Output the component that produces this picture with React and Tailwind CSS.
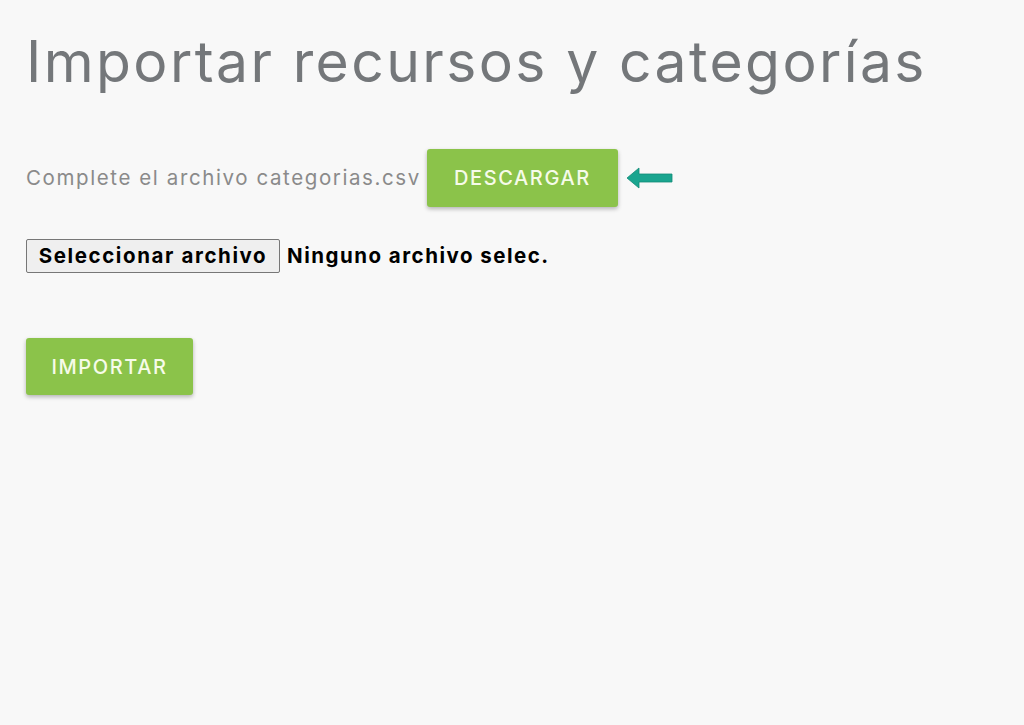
export default function App() {
  return (
    <div className="min-h-[725px] w-full bg-[#f8f8f8] px-[26px] pt-[22px]" style={{ fontFamily: "Inter, 'Noto Sans', sans-serif" }}>
      <h1 className="text-[57px] font-normal leading-[80px] tracking-[2.4px] text-[#74777a]">
        Importar recursos y categorías
      </h1>

      <div className="mt-[47px] flex items-center">
        <span className="text-[20.5px] tracking-[1.6px] text-[#8a8a8a]">Complete el archivo categorias.csv</span>
        <button className="ml-[6px] h-[58px] w-[191px] rounded-[3px] bg-[#8bc34a] text-[20px] font-medium tracking-[1.6px] text-[#f6fbe9] shadow-[0_2px_4px_rgba(0,0,0,0.28)]">
          DESCARGAR
        </button>
        <svg className="ml-[8px]" width="48" height="22" viewBox="0 0 48 22">
          <polygon points="1,11 13,1 13,7 46,7 46,15 13,15 13,21" fill="#1aa58f" stroke="#138a76" strokeWidth="0.8" />
        </svg>
      </div>

      <div className="mt-[32px] flex items-center">
        <div className="flex h-[34px] w-[254px] items-center justify-center rounded-[2px] border border-[#777] bg-[#efefef] text-[20.5px] font-bold tracking-[1.6px] text-black">
          Seleccionar archivo
        </div>
        <span className="ml-[7px] text-[20.5px] font-bold tracking-[1.5px] text-black">Ninguno archivo selec.</span>
      </div>

      <button className="mt-[65px] h-[57px] w-[167px] rounded-[3px] bg-[#8bc34a] text-[20px] font-medium tracking-[1.6px] text-[#f6fbe9] shadow-[0_2px_4px_rgba(0,0,0,0.28)]">
        IMPORTAR
      </button>
    </div>
  );
}
